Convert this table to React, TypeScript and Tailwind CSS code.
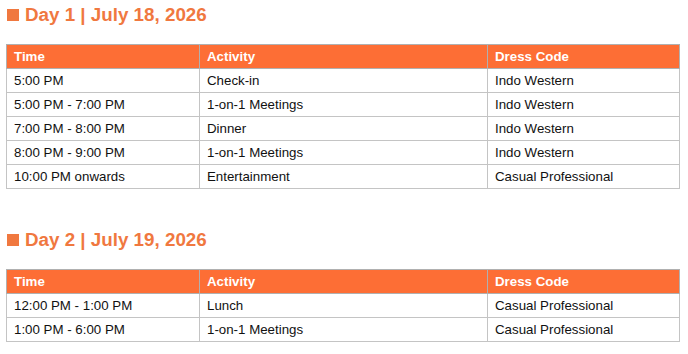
const days = [
  {
    title: "Day 1 | July 18, 2026",
    rows: [
      ["5:00 PM", "Check-in", "Indo Western"],
      ["5:00 PM - 7:00 PM", "1-on-1 Meetings", "Indo Western"],
      ["7:00 PM - 8:00 PM", "Dinner", "Indo Western"],
      ["8:00 PM - 9:00 PM", "1-on-1 Meetings", "Indo Western"],
      ["10:00 PM onwards", "Entertainment", "Casual Professional"],
    ],
  },
  {
    title: "Day 2 | July 19, 2026",
    rows: [
      ["12:00 PM - 1:00 PM", "Lunch", "Casual Professional"],
      ["1:00 PM - 6:00 PM", "1-on-1 Meetings", "Casual Professional"],
    ],
  },
]

function DaySchedule({ title, rows }: { title: string; rows: string[][] }) {
  return (
    <section>
      <h2 className="flex h-[30px] items-center gap-[6px] pl-px text-[18.8px] font-bold text-[#f0783f]">
        <span className="h-3 w-3 bg-[#f0783f]" />
        {title}
      </h2>
      <table className="mt-[14px] w-[673px] table-fixed border-collapse text-[13.3px]">
        <colgroup>
          <col className="w-[193px]" />
          <col className="w-[288px]" />
          <col className="w-[192px]" />
        </colgroup>
        <thead>
          <tr className="h-6 bg-[#fd6e35] text-left text-white">
            <th className="border border-[#b0b0b0] pl-[7px] font-bold">Time</th>
            <th className="border border-[#b0b0b0] pl-[7px] font-bold">Activity</th>
            <th className="border border-[#b0b0b0] pl-[7px] font-bold">Dress Code</th>
          </tr>
        </thead>
        <tbody className="text-[#111]">
          {rows.map((r, i) => (
            <tr key={i} className="h-6">
              {r.map((c, j) => (
                <td key={j} className="border border-[#c4c4c4] pl-[7px]">
                  {c}
                </td>
              ))}
            </tr>
          ))}
        </tbody>
      </table>
    </section>
  )
}

export default function App() {
  return (
    <div className="flex h-[354px] w-[688px] flex-col gap-[36px] bg-white px-[6px] font-['Liberation_Sans',Arial,sans-serif]">
      {days.map((d) => (
        <DaySchedule key={d.title} title={d.title} rows={d.rows} />
      ))}
    </div>
  )
}
